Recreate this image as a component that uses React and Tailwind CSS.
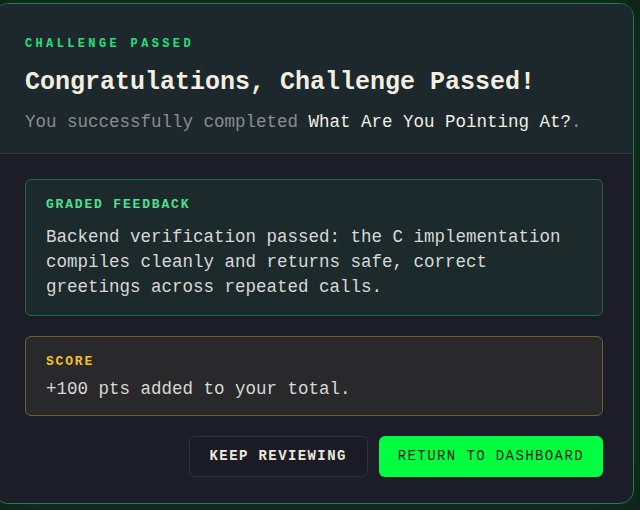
import React from "react";

const mono = "font-['Liberation_Mono','DejaVu_Sans_Mono',monospace]";

function Card({ tone, label, children, gap, pb }) {
    const styles = tone === "green"
        ? "border-[#1e6a45] bg-[#1c2a2c]"
        : "border-[#6f6030] bg-[#29292b]";
    const labelColor = tone === "green" ? "text-[#4de28f]" : "text-[#f5c518]";
    return (
        <div className={`rounded-md border px-5 pt-[17px] ${pb} ${styles}`}>
            <div className={`text-[13px] font-bold leading-4 tracking-[0.14em] ${labelColor}`}>{label}</div>
            <p className={`${gap} text-[17.5px] leading-[25px] text-[#d8d8d6]`}>{children}</p>
        </div>
    );
}

export default function App() {
    return (
        <div className={`min-h-screen overflow-hidden bg-[#0f1f18] pt-[3px] ${mono}`}>
            <div className="-ml-[6px] w-[640px] overflow-hidden rounded-[14px] border border-[#1f7a4c] bg-[#1d1d29] shadow-[0_0_40px_rgba(16,185,90,0.18)]">
                {/* header */}
                <div className="border-b border-[#2a3838] bg-[#1c282c] pl-[30px] pr-[30px] pt-8 pb-[19px]">
                    <div className="text-[12px] font-bold leading-4 tracking-[0.28em] text-[#22e07a]">CHALLENGE PASSED</div>
                    <h1 className="mt-[15px] text-[25px] font-bold leading-8 text-[#f2eee2]">
                        Congratulations, Challenge Passed!
                    </h1>
                    <p className="mt-[11px] text-[17.5px] leading-6 text-[#8c8c8c]">
                        You successfully completed <span className="text-[#f2eee2]">What Are You Pointing At?</span>.
                    </p>
                </div>

                {/* body */}
                <div className="flex flex-col gap-5 px-[30px] pt-[25px] pb-[26px]">
                    <Card tone="green" label="GRADED FEEDBACK" gap="mt-3" pb="pb-[15px]">
                        Backend verification passed: the C implementation compiles cleanly and returns safe, correct greetings across repeated calls.
                    </Card>
                    <Card tone="gold" label="SCORE" gap="mt-[7px]" pb="pb-[13px]">
                        +100 pts added to your total.
                    </Card>
                    <div className="flex justify-end gap-[11px]">
                        <button className="rounded-md border border-[#32323e] bg-[#1b1b26] px-5 py-[10px] text-[14px] font-bold leading-[19px] tracking-[0.1em] text-[#ebe7db]">
                            KEEP REVIEWING
                        </button>
                        <button className="rounded-md bg-[#00ff41] px-[19px] py-[11px] text-[14px] leading-[19px] tracking-[0.1em] text-[#0f1a13]">
                            RETURN TO DASHBOARD
                        </button>
                    </div>
                </div>
            </div>
        </div>
    );
}
